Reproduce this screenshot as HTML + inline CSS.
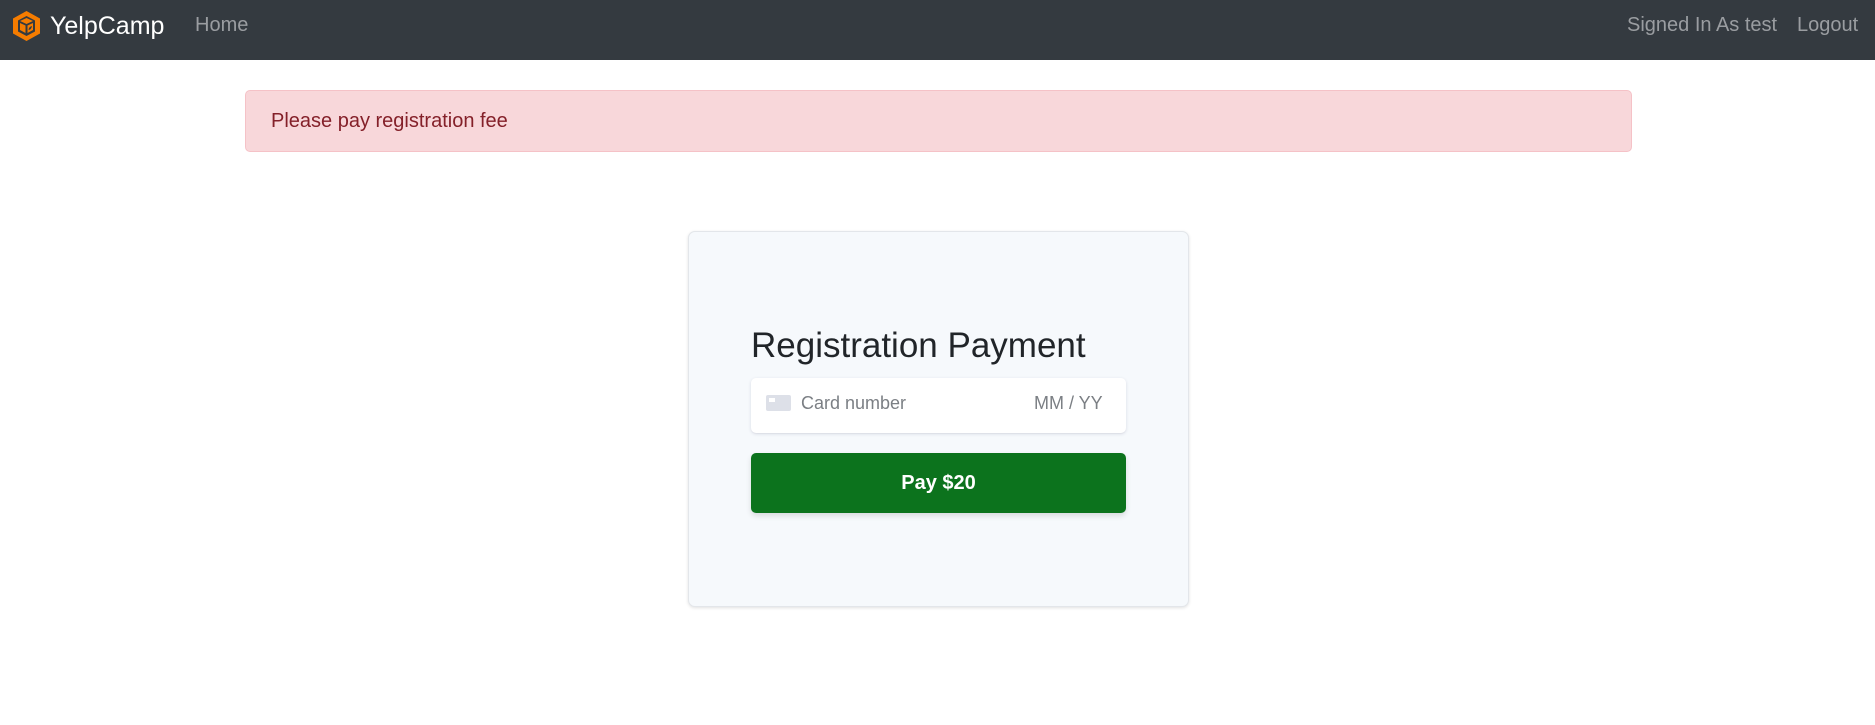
<!DOCTYPE html>
<html><head><style>
*{box-sizing:border-box;margin:0;padding:0}
body{width:1875px;height:725px;background:#fff;font-family:"Liberation Sans",sans-serif;position:relative;overflow:hidden}
.nav{position:absolute;left:0;top:0;width:1875px;height:60px;background:#343a40}
.t{position:absolute;white-space:nowrap}
</style></head><body>
<div class="nav">
<svg style="position:absolute;left:10px;top:10px" width="33" height="32" viewBox="0 0 33 32">
<polygon points="16.5,1 30,8.5 30,23.5 16.5,31 3,23.5 3,8.5" fill="#f57c00"/>
<polygon points="16.5,6 25,10.5 25,21.5 16.5,26 8,21.5 8,10.5" fill="#343a40"/>
<path d="M10 11 L16.5 8 L23 11 L16.5 14 Z" fill="#f57c00"/>
<path d="M10 13 L15.5 15.5 L15.5 23 L10 20 Z" fill="#f57c00"/>
<path d="M17.5 15.5 L23 13 L23 20 L17.5 23 Z" fill="#f57c00"/>
<path d="M18.5 20 Q19 16.5 22 16 Q21.5 19.5 18.5 20Z" fill="#343a40"/>
</svg>
<div class="t" style="left:50px;top:12px;font-size:25px;color:#fff">YelpCamp</div>
<div class="t" style="left:195px;top:14px;font-size:20px;color:#9a9da1">Home</div>
<div class="t" style="left:1627px;top:14px;font-size:20px;color:#9a9da1">Signed In As test</div>
<div class="t" style="left:1797px;top:14px;font-size:20px;color:#9a9da1">Logout</div>
</div>
<div style="position:absolute;left:245px;top:90px;width:1387px;height:62px;background:#f8d7da;border:1px solid #f5c2c7;border-radius:5px"></div>
<div class="t" style="left:271px;top:110px;font-size:20px;color:#842029">Please pay registration fee</div>
<div style="position:absolute;left:688px;top:231px;width:501px;height:376px;background:#f6f9fc;border:1px solid #e3e6ea;border-radius:7px;box-shadow:0 1px 3px rgba(0,0,0,.12)"></div>
<div class="t" style="left:751px;top:326px;font-size:35px;color:#212529">Registration Payment</div>
<div style="position:absolute;left:751px;top:378px;width:375px;height:55px;background:#fff;border-radius:5px;box-shadow:0 1px 3px rgba(50,50,93,.15),0 1px 0 rgba(0,0,0,.02)"></div>
<div style="position:absolute;left:766px;top:395px;width:25px;height:16px;background:#dde0e8;border-radius:2px"></div>
<div style="position:absolute;left:769px;top:398px;width:6px;height:4px;background:#fff"></div>
<div class="t" style="left:801px;top:393px;font-size:18px;color:#7b7f84">Card number</div>
<div class="t" style="left:1034px;top:393px;font-size:18px;color:#7b7f84">MM / YY</div>
<div style="position:absolute;left:751px;top:453px;width:375px;height:60px;background:#0c731d;border-radius:5px;box-shadow:0 3px 6px rgba(0,0,0,.12);color:#fff;font-weight:bold;font-size:20px;text-align:center;line-height:60px">Pay $20</div>
</body></html>
